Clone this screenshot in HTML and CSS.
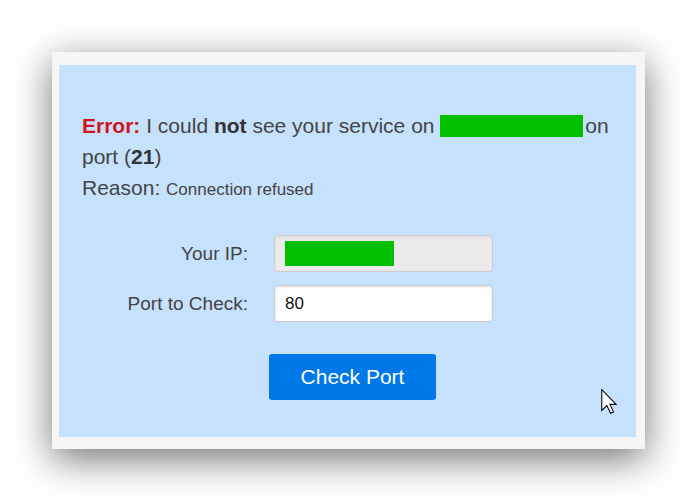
FILE: index.html
```html
<!DOCTYPE html>
<html lang="en">
<head>
    <meta charset="UTF-8">
    <meta name="viewport" content="width=device-width, initial-scale=1.0">
    <title>Open Port Check</title>
    <link rel="stylesheet" href="styles.css">
</head>
<body>
    <div class="frame">
        <div class="panel">
            <!-- result message -->
            <div class="message">
                <span class="error">Error:</span> I could <b>not</b> see your service on <span class="hidden-ip"></span><span class="after-ip">on</span><br>
                port (<b>21</b>)
            </div>
            <div class="reason">Reason: <span class="reason-text">Connection refused</span></div>

            <form class="check-form" onsubmit="return false">
                <label class="form-label" for="ip">Your IP:</label>
                <div class="form-input readonly" id="ip"><span class="ip-box"></span></div>

                <label class="form-label" for="port">Port to Check:</label>
                <input class="form-input" id="port" type="text" value="80">

                <button class="check-button" type="submit">Check Port</button>
            </form>

            <svg class="cursor" width="16" height="25" viewBox="0 0 12 19">
                <path d="M0.5 0.5 V16.3 L4.4 12.6 L7.2 18.4 L9.4 17.4 L6.7 11.7 H11.4 Z" fill="#fff" stroke="#000" stroke-width="0.8" stroke-linejoin="miter"/>
            </svg>
        </div>
    </div>
</body>
</html>
```

FILE: styles.css
```css
body {
    margin: 0;
    min-height: 100vh;
    background-color: #fff;
    font-family: "Liberation Sans", Arial, sans-serif;
    color: #444;
    padding: 52px 0 53px 52px;
    box-sizing: border-box;
}

.frame {
    width: 593px;
    padding: 13px 9px 12px 7px;
    box-sizing: border-box;
    background-color: #f6f6f6;
    box-shadow: 0 10px 36px rgba(0, 0, 0, 0.55);
}

.panel {
    position: relative;
    height: 372px;
    padding: 45px 23px 0;
    box-sizing: border-box;
    background-color: #c6e1fb;
}

.message {
    font-size: 21px;
    line-height: 31px;
}

.message b {
    color: #333;
}

.error {
    color: #d0161c;
    font-weight: bold;
}

.hidden-ip {
    display: inline-block;
    width: 143px;
    height: 22px;
    vertical-align: -4px;
    background-color: #00c000;
}

.after-ip {
    margin-left: 2px;
}

.reason {
    font-size: 21px;
    line-height: 32px;
}

.reason-text {
    font-size: 17px;
}

/* form */
.check-form {
    display: grid;
    grid-template-columns: 166px 219px;
    column-gap: 26px;
    row-gap: 13px;
    margin-top: 29px;
}

.form-label {
    align-self: center;
    text-align: right;
    font-size: 19px;
    color: #444;
}

.form-input {
    height: 37px;
    box-sizing: border-box;
    border: 1px solid #ccc;
    border-radius: 4px;
    box-shadow: inset 0 1px 3px #ddd;
    background-color: #fff;
    padding: 0 10px;
    font-family: "Liberation Sans", Arial, sans-serif;
    font-size: 17px;
    color: #111;
    margin: 0;
}

.form-input.readonly {
    display: flex;
    align-items: center;
    background-color: #ebebeb;
}

.ip-box {
    width: 109px;
    height: 25px;
    background-color: #00c000;
}

.check-button {
    grid-column: 1 / 3;
    justify-self: start;
    width: 167px;
    height: 46px;
    margin: 19px 0 0 187px;
    border: none;
    border-radius: 3px;
    background-color: #0078e7;
    color: #fff;
    font-family: "Liberation Sans", Arial, sans-serif;
    font-size: 21px;
    cursor: pointer;
}

.cursor {
    position: absolute;
    left: 542px;
    top: 324px;
}
```
